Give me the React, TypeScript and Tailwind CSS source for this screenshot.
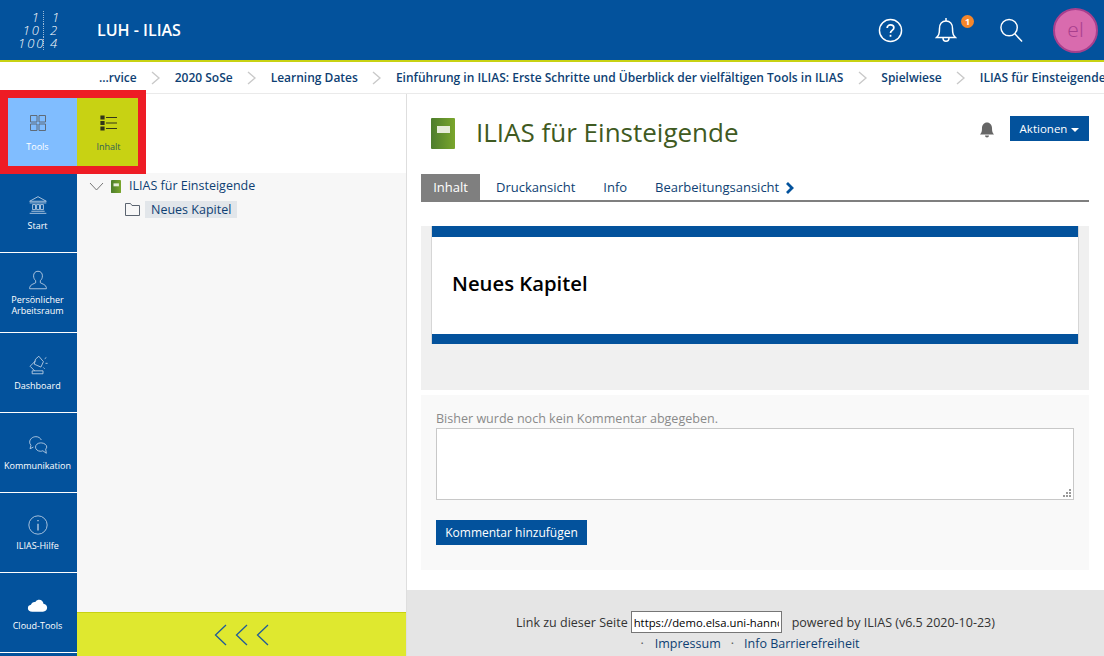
import { ReactNode } from 'react'

const crumbs = [
  '...rvice',
  '2020 SoSe',
  'Learning Dates',
  'Einführung in ILIAS: Erste Schritte und Überblick der vielfältigen Tools in ILIAS',
  'Spielwiese',
  'ILIAS für Einsteigende',
]

function Icon({ children, size = 20, sw = 1 }: { children: ReactNode; size?: number; sw?: number }) {
  return (
    <svg width={size} height={size} viewBox="0 0 24 24" fill="none" stroke="#c6d6e8" strokeWidth={sw}>
      {children}
    </svg>
  )
}

const navItems: { label: ReactNode; icon: ReactNode }[] = [
  {
    label: 'Start',
    icon: (
      <Icon>
        <path d="M2 7.500 12 2l10 5.500zM2 9.500h20M4 19.500h16M2 22h20" />
        <path d="M5.500 11.500h3.500v6H5.500zM10.300 11.500h3.500v6h-3.500zM15 11.500h3.500v6H15z" />
      </Icon>
    ),
  },
  {
    label: (
      <>
        Persönlicher
        <br />
        Arbeitsraum
      </>
    ),
    icon: (
      <Icon>
        <path d="M12 1.500c-3.400 0-5.300 2.400-5.300 5.500 0 2.500 1 4.500 2.500 5.800v2.500C7.200 16.600 2.500 17.500 2 21v1.500h20V21c-.5-3.500-5.200-4.400-7.200-5.700v-2.500c1.500-1.300 2.500-3.300 2.500-5.800 0-3.100-1.900-5.500-5.300-5.500z" />
      </Icon>
    ),
  },
  {
    label: 'Dashboard',
    icon: (
      <Icon>
        <path d="M5 22.500v-3.500h13v3.500zM8 19 2.500 13.500 9 7" />
        <path d="M9 5 13 1.500l5.500 6.500-3 6.500L7.500 11z" />
        <path d="M20 4.500l2-1.500M21 10h2.500M18.500 15l1.500 1.500" />
      </Icon>
    ),
  },
  {
    label: 'Kommunikation',
    icon: (
      <Icon>
        <path d="M16 6C14.800 3.500 12.500 2 9.500 2 5.500 2 2 4.800 2 8.500c0 1.500.5 2.800 1.500 3.800L2.500 16.500l4-2" />
        <path d="M15 9.500c-3.300 0-6 2.200-6 5s2.700 5 6 5c1 0 2-.2 2.800-.6l4.200 3-.8-5c.8-.8 1.300-1.800 1.300-2.400 0-2.800-3.200-5-6.500-5z" />
      </Icon>
    ),
  },
  {
    label: 'ILIAS-Hilfe',
    icon: (
      <Icon>
        <circle cx="12" cy="12" r="11" />
        <path d="M12 10.500V18.500" strokeWidth="1.500" />
        <path d="M12 6v1.500" strokeWidth="1.500" />
      </Icon>
    ),
  },
  {
    label: 'Cloud-Tools',
    icon: (
      <svg width="21" height="21" viewBox="0 0 24 24" fill="#ffffff">
        <path d="M6 19c-3 0-5-1.700-5-4 0-2 1.500-3.500 3.500-3.800C5.200 9 7.200 7.500 9.500 8 10.800 6 12.500 5.500 14 5.500c2.700 0 4.700 2 4.800 4.600 2.500.2 4.200 2.200 4.200 4.500 0 2.500-2 4.400-4.800 4.400z" />
      </svg>
    ),
  },
]

function Book({ w, h }: { w: number; h: number }) {
  return (
    <svg width={w} height={h} viewBox="0 0 24 31">
      <defs>
        <linearGradient id="bookFill" x1="0" x2="1" y1="0" y2="0">
          <stop offset="0" stopColor="#4d7d2c" />
          <stop offset="1" stopColor="#7aa62c" />
        </linearGradient>
      </defs>
      <rect x="0" y="0" width="24" height="31" rx="1" fill="url(#bookFill)" />
      <rect x="6" y="8" width="13" height="7" fill="#e6ecd8" />
    </svg>
  )
}

export default function App() {
  return (
    <div className="relative flex h-screen flex-col overflow-hidden bg-white font-['Open_Sans',sans-serif] text-[#333]">
      {/* top bar */}
      <header className="flex h-[62px] shrink-0 items-center border-b-2 border-[#c8d213] bg-[#03529c]">
        <div className="flex w-[97px] shrink-0 pl-[18px]">
          <div className="grid grid-cols-[26px_14px] text-[13px] leading-[13px] font-light text-white italic">
            <span className="border-r border-dotted border-white/60 pr-[2px] text-right tracking-[2px]">1</span>
            <span className="pl-[8px]">1</span>
            <span className="border-r border-dotted border-white/60 pr-[2px] text-right tracking-[2px]">10</span>
            <span className="pl-[6px]">2</span>
            <span className="border-r border-dotted border-white/60 pr-[2px] text-right tracking-[2px]">100</span>
            <span className="pl-[6px]">4</span>
          </div>
        </div>
        <span className="text-[16px] font-semibold text-white">LUH - ILIAS</span>
        <div className="ml-auto flex items-center pr-[6px]">
          <svg className="mr-[32px]" width="25" height="25" viewBox="0 0 26 26" fill="none" stroke="white" strokeWidth="1.500">
            <circle cx="13" cy="13" r="11.500" />
            <path d="M9.500 10.500c0-2 1.500-3.300 3.500-3.300s3.500 1.200 3.500 3c0 2.600-3.500 2.700-3.500 5.300" strokeWidth="1.800" />
            <path d="M13 17.500v2" strokeWidth="1.800" />
          </svg>
          <div className="relative mr-[42px] h-[26px] w-[22px]">
            <svg width="22" height="26" viewBox="0 0 22 26" fill="none" stroke="white" strokeWidth="1.500">
              <path d="M1.500 20.500c2-2 3-3 3-9 0-4.500 2.500-7.500 6.500-7.500s6.500 3 6.500 7.500c0 6 1 7 3 9z" />
              <path d="M8 21c0 2 1.300 3.300 3 3.300s3-1.300 3-3.300M11 1v3" />
            </svg>
            <span className="absolute top-[-2px] left-[26px] flex h-[13px] w-[13px] items-center justify-center rounded-full bg-[#f5862a] text-[9px] leading-none font-bold text-white">
              1
            </span>
          </div>
          <svg className="mr-[29px]" width="25" height="25" viewBox="0 0 25 26" fill="none" stroke="white" strokeWidth="1.500">
            <circle cx="10" cy="10" r="8.500" />
            <path d="M16 16.500l7.500 8" />
          </svg>
          <div className="flex h-[45px] w-[45px] items-center justify-center rounded-full border-[2px] border-[#a83f8d] bg-[#d96bae] pb-[2px] text-[21px] leading-none font-light text-[#a83f8d]">
            el
          </div>
        </div>
      </header>

      {/* breadcrumb */}
      <nav className="flex h-[32px] shrink-0 items-center gap-[14.500px] overflow-hidden border-b border-[#eaeaea] pt-[1px] pl-[99px] text-[12px] font-semibold whitespace-nowrap text-[#0e3f73]">
        {crumbs.map((c, i) => (
          <div key={c} className="flex shrink-0 items-center gap-[14.500px]">
            {i > 0 && (
              <svg width="9" height="14" viewBox="0 0 9 14" fill="none" stroke="#c9c9c9" strokeWidth="1.400">
                <path d="M1 1l7 6-7 6" />
              </svg>
            )}
            <span>{c}</span>
          </div>
        ))}
      </nav>

      <div className="flex min-h-0 flex-1">
        {/* main bar */}
        <aside className="flex w-[77px] shrink-0 flex-col bg-[#03529c] pt-[79px]">
          {navItems.map((item, i) => (
            <div key={i} className="flex h-[80px] shrink-0 flex-col items-center justify-center gap-[4px] border-b-[1px] border-white pr-[2px] text-center text-[9px] leading-[11px] text-white">
              <div className="flex h-[21px] items-center">{item.icon}</div>
              <span>{item.label}</span>
            </div>
          ))}
        </aside>

        {/* slate */}
        <section className="flex w-[330px] shrink-0 flex-col border-r border-[#dedede]">
          <div className="h-[79px] shrink-0 bg-white" />
          <div className="flex-1 bg-[#f7f7f7] pt-[2px] pl-[12px] text-[12.500px] text-[#0e3f73]">
            <div className="flex h-[23px] items-center">
              <svg width="15" height="9" viewBox="0 0 15 9" fill="none" stroke="#777" strokeWidth="1">
                <path d="M1 1l6.500 7L14 1" />
              </svg>
              <span className="mr-[8px] ml-[7px]">
                <Book w={10} h={13} />
              </span>
              <span>ILIAS für Einsteigende</span>
            </div>
            <div className="-mt-px flex h-[24px] items-center pl-[36px]">
              <svg className="mr-[5px]" width="15" height="13" viewBox="0 0 15 13" fill="none" stroke="#5b6470" strokeWidth="1">
                <path d="M.5 12.500V.5h5l1.500 2h7.500v10z" />
              </svg>
              <span className="bg-[#e2e6ea] px-[6px] leading-[17px]">Neues Kapitel</span>
            </div>
          </div>
          <div className="flex h-[44px] shrink-0 items-center justify-center gap-[8px] border-t border-[#c8d213] bg-[#dfe82f] pr-[1px]">
            {[0, 1, 2].map((n) => (
              <svg key={n} width="13" height="22" viewBox="0 0 13 22" fill="none" stroke="#1f5a9a" strokeWidth="1.300">
                <path d="M12 1 1.500 11 12 21" />
              </svg>
            ))}
          </div>
        </section>

        {/* content */}
        <main className="flex min-w-0 flex-1 flex-col">
          <div className="flex-1 px-[14px] pr-[15px]">
            <div className="flex h-[80px] items-start pl-[10px]">
              <div className="mt-[24px]">
                <Book w={24} h={31} />
              </div>
              <h1 className="mt-[19px] ml-[21px] text-[26px] leading-[38px] font-normal text-[#3f5a22]">ILIAS für Einsteigende</h1>
              <svg className="mt-[27px] ml-auto" width="16" height="17" viewBox="0 0 16 17" fill="#666">
                <path d="M1 13.500c1.500-1.500 2-3 2-6.500 0-3 2-5.500 5-5.500s5 2.500 5 5.500c0 3.500.5 5 2 6.500z" />
                <path d="M6 14.500c0 1.200.9 2 2 2s2-.8 2-2z" />
              </svg>
              <button className="mt-[22px] ml-[15px] flex h-[25px] w-[79px] items-center justify-center gap-[4px] bg-[#03529c] text-[11.500px] text-white">
                Aktionen
                <span className="mt-[2px] border-x-[4px] border-t-[4px] border-x-transparent border-t-white" />
              </button>
            </div>
            <div className="flex h-[28px] items-stretch border-b-2 border-[#7f7f7f] text-[13px] text-[#0e3f73]">
              <span className="flex w-[59px] items-center justify-center bg-[#7f7f7f] pt-[2px] text-white">Inhalt</span>
              <span className="flex items-center pt-[2px] pl-[16px]">Druckansicht</span>
              <span className="flex items-center pt-[2px] pl-[28px]">Info</span>
              <span className="flex items-center pt-[2px] pl-[28px]">
                Bearbeitungsansicht
                <svg className="ml-[6px]" width="10" height="12" viewBox="0 0 10 12" fill="none" stroke="#03529c" strokeWidth="2.800">
                  <path d="M2 1l5 5-5 5" />
                </svg>
              </span>
            </div>
            <div className="mt-[24px] h-[164px] bg-[#f0f0f0] px-[10px]">
              <div className="h-[118px] border-x border-[#d6d6d6] bg-white">
                <div className="h-[11px] bg-[#03529c]" />
                <div className="flex h-[97px] items-center pb-[4px] pl-[20px] text-[20.300px] font-semibold text-black">Neues Kapitel</div>
                <div className="h-[10px] bg-[#03529c]" />
              </div>
            </div>
            <div className="mt-[5px] h-[175px] bg-[#f9f9f9] px-[15px] pt-[14px]">
              <p className="text-[12.550px] leading-[19px] text-[#8a8a8a]">Bisher wurde noch kein Kommentar abgegeben.</p>
              <div className="relative">
                <textarea className="block h-[72px] w-full resize-none border border-[#c8c8c8] bg-white" />
                <svg className="absolute right-[3px] bottom-[3px]" width="8" height="8" viewBox="0 0 8 8" fill="#999">
                  <path d="M6 0h2v2H6zM3 3h2v2H3zM6 3h2v2H6zM0 6h2v2H0zM3 6h2v2H3zM6 6h2v2H6z" />
                </svg>
              </div>
              <button className="mt-[20px] h-[25px] w-[151px] bg-[#03529c] text-[12px] text-white">Kommentar hinzufügen</button>
            </div>
          </div>
          <footer className="h-[66px] shrink-0 bg-[#e5e5e5] pt-[21px] text-center text-[12.500px] leading-[21px] text-[#333]">
            <div className="flex items-center justify-center">
              Link zu dieser Seite
              <input
                readOnly
                value="https://demo.elsa.uni-hannover.de/goto.php"
                className="mr-[10px] ml-[3px] h-[22px] w-[151px] border border-[#767676] bg-white px-[2px] text-[11.300px] text-black"
              />
              powered by ILIAS (v6.5 2020-10-23)
            </div>
            <div className="flex justify-center pr-[11px] text-[#0e3f73]">
              <span className="text-[#555]">·</span>
              <span className="ml-[11px]">Impressum</span>
              <span className="ml-[10px] text-[#555]">·</span>
              <span className="ml-[10px]">Info Barrierefreiheit</span>
            </div>
          </footer>
        </main>
      </div>

      {/* red highlight drawn over the screenshot */}
      <div className="absolute top-[90px] left-0 flex h-[84px] w-[146px] border-[8px] border-[#ee1c25]">
        <div className="flex w-[69px] flex-col items-center bg-[#80bdff] pt-[16px] pr-[10px] text-[9px] text-white">
          <svg width="18" height="18" viewBox="0 0 18 18" fill="none" stroke="#5f6b78" strokeWidth="1">
            <path d="M1.500 1.500h6.500v6.500H1.500zM10 1.500h6.500v6.500H10zM1.500 10h6.500v6.500H1.500zM10 10h6.500v6.500H10z" />
          </svg>
          <span className="mt-[9px] leading-[12px]">Tools</span>
        </div>
        <div className="flex w-[61px] flex-col items-center bg-[#c8d213] pt-[16px] pl-[2px] text-[9px] text-[#2f5f55]">
          <svg width="18" height="18" viewBox="0 0 18 18" fill="none" stroke="#33351a" strokeWidth="1.200">
            <path d="M6 3.500h11M6 9h11M6 14.500h11" />
            <path d="M1 2h3v3H1zM1 7.500h3v3H1zM1 13h3v3H1z" fill="#33351a" />
          </svg>
          <span className="mt-[9px] leading-[12px]">Inhalt</span>
        </div>
      </div>
    </div>
  )
}
